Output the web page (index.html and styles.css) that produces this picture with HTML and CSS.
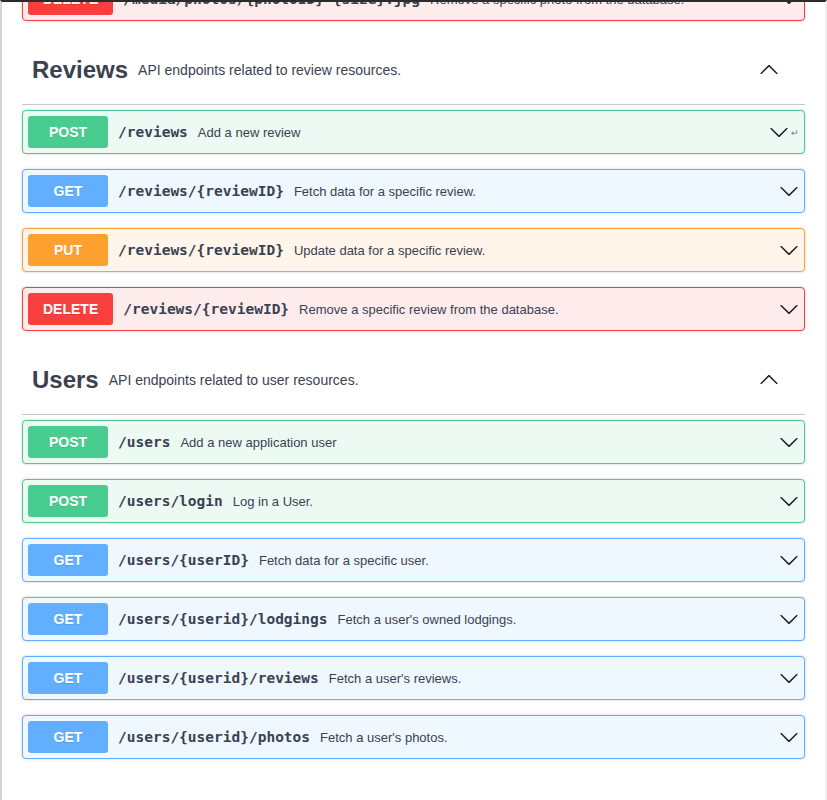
FILE: index.html
```html
<!DOCTYPE html>
<html>
<head>
<meta charset="utf-8">
<link rel="stylesheet" href="styles.css">
</head>
<body>
<div class="frame">
  <div class="content">
    <div class="op op-delete">
      <span class="method">DELETE</span>
      <span class="path">/media/photos/{photoID}-{size}.jpg</span>
      <span class="desc">Remove a specific photo from the database.</span>
      <svg class="arrow" viewBox="0 0 20 20"><path d="M17.418 6.109c.272-.268.709-.268.979 0s.271.701 0 .969l-7.908 7.83c-.27.268-.707.268-.979 0l-7.908-7.83c-.27-.268-.27-.701 0-.969.271-.268.709-.268.979 0L10 13.25l7.418-7.141z"/></svg>
    </div>

    <section class="tag-section">
      <h3 class="tag">
        <span class="tag-name">Reviews</span>
        <small class="tag-desc">API endpoints related to review resources.</small>
        <svg class="arrow up" viewBox="0 0 20 20"><path d="M17.418 6.109c.272-.268.709-.268.979 0s.271.701 0 .969l-7.908 7.83c-.27.268-.707.268-.979 0l-7.908-7.83c-.27-.268-.27-.701 0-.969.271-.268.709-.268.979 0L10 13.25l7.418-7.141z"/></svg>
      </h3>
      <div class="op op-post">
        <span class="method">POST</span>
        <span class="path">/reviews</span>
        <span class="desc">Add a new review</span>
        <svg class="arrow" viewBox="0 0 20 20"><path d="M17.418 6.109c.272-.268.709-.268.979 0s.271.701 0 .969l-7.908 7.83c-.27.268-.707.268-.979 0l-7.908-7.83c-.27-.268-.27-.701 0-.969.271-.268.709-.268.979 0L10 13.25l7.418-7.141z"/></svg>
        <span class="ret">↵</span>
      </div>
      <div class="op op-get">
        <span class="method">GET</span>
        <span class="path">/reviews/{reviewID}</span>
        <span class="desc">Fetch data for a specific review.</span>
        <svg class="arrow" viewBox="0 0 20 20"><path d="M17.418 6.109c.272-.268.709-.268.979 0s.271.701 0 .969l-7.908 7.83c-.27.268-.707.268-.979 0l-7.908-7.83c-.27-.268-.27-.701 0-.969.271-.268.709-.268.979 0L10 13.25l7.418-7.141z"/></svg>
      </div>
      <div class="op op-put">
        <span class="method">PUT</span>
        <span class="path">/reviews/{reviewID}</span>
        <span class="desc">Update data for a specific review.</span>
        <svg class="arrow" viewBox="0 0 20 20"><path d="M17.418 6.109c.272-.268.709-.268.979 0s.271.701 0 .969l-7.908 7.83c-.27.268-.707.268-.979 0l-7.908-7.83c-.27-.268-.27-.701 0-.969.271-.268.709-.268.979 0L10 13.25l7.418-7.141z"/></svg>
      </div>
      <div class="op op-delete">
        <span class="method">DELETE</span>
        <span class="path">/reviews/{reviewID}</span>
        <span class="desc">Remove a specific review from the database.</span>
        <svg class="arrow" viewBox="0 0 20 20"><path d="M17.418 6.109c.272-.268.709-.268.979 0s.271.701 0 .969l-7.908 7.83c-.27.268-.707.268-.979 0l-7.908-7.83c-.27-.268-.27-.701 0-.969.271-.268.709-.268.979 0L10 13.25l7.418-7.141z"/></svg>
      </div>
    </section>

    <section class="tag-section">
      <h3 class="tag">
        <span class="tag-name">Users</span>
        <small class="tag-desc">API endpoints related to user resources.</small>
        <svg class="arrow up" viewBox="0 0 20 20"><path d="M17.418 6.109c.272-.268.709-.268.979 0s.271.701 0 .969l-7.908 7.83c-.27.268-.707.268-.979 0l-7.908-7.83c-.27-.268-.27-.701 0-.969.271-.268.709-.268.979 0L10 13.25l7.418-7.141z"/></svg>
      </h3>
      <div class="op op-post">
        <span class="method">POST</span>
        <span class="path">/users</span>
        <span class="desc">Add a new application user</span>
        <svg class="arrow" viewBox="0 0 20 20"><path d="M17.418 6.109c.272-.268.709-.268.979 0s.271.701 0 .969l-7.908 7.83c-.27.268-.707.268-.979 0l-7.908-7.83c-.27-.268-.27-.701 0-.969.271-.268.709-.268.979 0L10 13.25l7.418-7.141z"/></svg>
      </div>
      <div class="op op-post">
        <span class="method">POST</span>
        <span class="path">/users/login</span>
        <span class="desc">Log in a User.</span>
        <svg class="arrow" viewBox="0 0 20 20"><path d="M17.418 6.109c.272-.268.709-.268.979 0s.271.701 0 .969l-7.908 7.83c-.27.268-.707.268-.979 0l-7.908-7.83c-.27-.268-.27-.701 0-.969.271-.268.709-.268.979 0L10 13.25l7.418-7.141z"/></svg>
      </div>
      <div class="op op-get">
        <span class="method">GET</span>
        <span class="path">/users/{userID}</span>
        <span class="desc">Fetch data for a specific user.</span>
        <svg class="arrow" viewBox="0 0 20 20"><path d="M17.418 6.109c.272-.268.709-.268.979 0s.271.701 0 .969l-7.908 7.83c-.27.268-.707.268-.979 0l-7.908-7.83c-.27-.268-.27-.701 0-.969.271-.268.709-.268.979 0L10 13.25l7.418-7.141z"/></svg>
      </div>
      <div class="op op-get">
        <span class="method">GET</span>
        <span class="path">/users/{userid}/lodgings</span>
        <span class="desc">Fetch a user's owned lodgings.</span>
        <svg class="arrow" viewBox="0 0 20 20"><path d="M17.418 6.109c.272-.268.709-.268.979 0s.271.701 0 .969l-7.908 7.83c-.27.268-.707.268-.979 0l-7.908-7.83c-.27-.268-.27-.701 0-.969.271-.268.709-.268.979 0L10 13.25l7.418-7.141z"/></svg>
      </div>
      <div class="op op-get">
        <span class="method">GET</span>
        <span class="path">/users/{userid}/reviews</span>
        <span class="desc">Fetch a user's reviews.</span>
        <svg class="arrow" viewBox="0 0 20 20"><path d="M17.418 6.109c.272-.268.709-.268.979 0s.271.701 0 .969l-7.908 7.83c-.27.268-.707.268-.979 0l-7.908-7.83c-.27-.268-.27-.701 0-.969.271-.268.709-.268.979 0L10 13.25l7.418-7.141z"/></svg>
      </div>
      <div class="op op-get">
        <span class="method">GET</span>
        <span class="path">/users/{userid}/photos</span>
        <span class="desc">Fetch a user's photos.</span>
        <svg class="arrow" viewBox="0 0 20 20"><path d="M17.418 6.109c.272-.268.709-.268.979 0s.271.701 0 .969l-7.908 7.83c-.27.268-.707.268-.979 0l-7.908-7.83c-.27-.268-.27-.701 0-.969.271-.268.709-.268.979 0L10 13.25l7.418-7.141z"/></svg>
      </div>
    </section>
  </div>
</div>
</body>
</html>
```

FILE: styles.css
```css
* { box-sizing: border-box; }

html, body {
  margin: 0;
  padding: 0;
  background: #ffffff;
}

body {
  font-family: "Liberation Sans", Arial, sans-serif;
  color: #3b4151;
}

.frame {
  height: 800px;
  border-top: 2px solid #2b2b2b;
  border-left: 2px solid #d3d3d3;
  border-right: 2px solid #efefef;
  overflow: hidden;
}

.content {
  margin-top: -25px;
  padding: 0 20px;
}

.op {
  display: flex;
  align-items: center;
  padding: 5px;
  border: 1px solid;
  border-radius: 4px;
  margin-bottom: 15px;
  box-shadow: 0 0 3px rgba(0, 0, 0, 0.19);
}

.method {
  min-width: 80px;
  height: 32px;
  padding: 0 15px;
  display: flex;
  align-items: center;
  justify-content: center;
  border-radius: 3px;
  color: #ffffff;
  font-size: 14px;
  font-weight: 700;
  text-shadow: 0 1px 0 rgba(0, 0, 0, 0.1);
}

.path {
  padding: 0 10px;
  font-family: "DejaVu Sans Mono", "Liberation Mono", monospace;
  font-size: 14.5px;
  font-weight: 700;
  color: #3b4151;
  white-space: nowrap;
}

.desc {
  flex: 1;
  font-size: 13px;
  color: #3b4151;
  white-space: nowrap;
}

.arrow {
  width: 20px;
  height: 20px;
  flex: none;
  fill: #1f1f1f;
}

.arrow.up {
  transform: rotate(180deg);
}

.ret {
  width: 10px;
  font-size: 9px;
  color: #777777;
  text-align: right;
  padding-top: 2px;
}

.op-post { background: #edfaf4; border-color: #49cc90; }
.op-post .method { background: #49cc90; }

.op-get { background: #eff7ff; border-color: #61affe; }
.op-get .method { background: #61affe; }

.op-put { background: #fff5ea; border-color: #fca130; }
.op-put .method { background: #fca130; }

.op-delete { background: #feecec; border-color: #f93e3e; }
.op-delete .method { background: #f93e3e; }

.tag {
  display: flex;
  align-items: center;
  height: 69px;
  margin: 0 0 5px;
  padding: 0 26px 0 10px;
  border-bottom: 1px solid rgba(59, 65, 81, 0.3);
  font-weight: 400;
}

.tag-name {
  font-size: 24px;
  font-weight: 700;
  color: #3b4151;
}

.tag-desc {
  flex: 1;
  padding: 0 10px;
  font-size: 14px;
  color: #3b4151;
}
```
